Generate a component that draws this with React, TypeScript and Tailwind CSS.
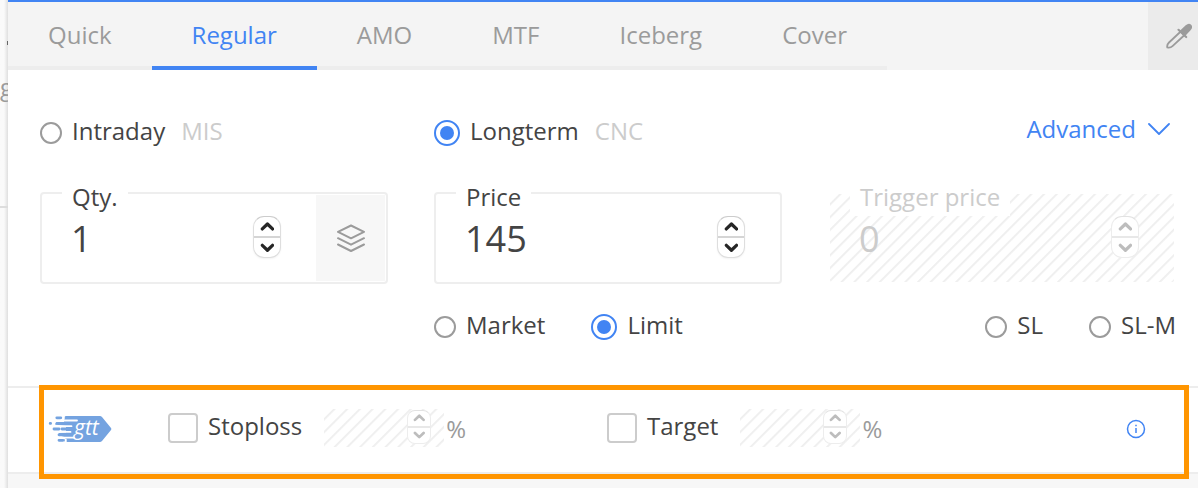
import { useState } from "react";
import type { ReactNode } from "react";

const HATCH =
  "bg-[repeating-linear-gradient(135deg,#ffffff_0px,#ffffff_6px,#eeeeee_7px,#f1f1f1_8px,#ffffff_9px)]";

function RadioOption({
  name,
  checked,
  onChange,
  children,
  hint,
}: {
  name: string;
  checked: boolean;
  onChange: () => void;
  children: ReactNode;
  hint?: string;
}) {
  return (
    <label className="flex items-center gap-[10px] whitespace-nowrap">
      <input
        type="radio"
        name={name}
        checked={checked}
        onChange={onChange}
        className="grid size-[22px] shrink-0 appearance-none place-content-center rounded-full border-2 border-[#9b9b9b] bg-white before:rounded-full checked:size-[26px] checked:border-[#4184f3] checked:before:size-[14px] checked:before:bg-[#4184f3]"
      />
      <span className="pb-1">
        {children}
        {hint && <span className="ml-4 text-[#cccccc]">{hint}</span>}
      </span>
    </label>
  );
}

function Arrow({ up }: { up?: boolean }) {
  return (
    <svg viewBox="0 0 16 10" className="w-4/7" fill="none" stroke="currentColor" strokeWidth="3.500" strokeLinecap="round" strokeLinejoin="round">
      <path d={up ? "M2.500 7.500 8 2.200l5.500 5.300" : "M2.500 2.500 8 7.800l5.500-5.300"} />
    </svg>
  );
}

function Stepper({ label, small, disabled }: { label: string; small?: boolean; disabled?: boolean }) {
  return (
    <span
      className={`mb-[2px] flex shrink-0 flex-col overflow-hidden border bg-white ${
        small ? "h-[34px] w-6 rounded-[8px]" : "h-[42px] w-7 rounded-[11px]"
      } ${
        disabled
          ? "border-[#ededed] border-t-[#e2e2e2] text-[#bdbdbd]"
          : "border-[#dedede] border-t-[#cccccc] text-[#262626] shadow-xs"
      }`}
    >
      <button type="button" disabled={disabled} aria-label={`Increase ${label}`} className={`flex flex-1 items-center justify-center border-b-2 ${disabled ? "border-[#e8e8e8]" : "border-[#d5d5d5]"}`}>
        <Arrow up />
      </button>
      <button type="button" disabled={disabled} aria-label={`Decrease ${label}`} className="flex flex-1 items-center justify-center">
        <Arrow />
      </button>
    </span>
  );
}

function Field({
  id,
  label,
  value,
  disabled,
  children,
}: {
  id: string;
  label: string;
  value: string;
  disabled?: boolean;
  children?: ReactNode;
}) {
  const [text, setText] = useState(value);
  return (
    <div
      className={`relative flex h-[92px] rounded-[4px] border-2 bg-clip-padding ${
        disabled ? `border-transparent text-[#cccccc] ${HATCH}` : "border-[#eeeeee]"
      }`}
    >
      <label htmlFor={id} className="absolute -top-[13px] left-5 bg-white px-[10px] pb-[3px]">
        {label}
      </label>
      <div className="flex min-w-0 flex-1 items-center pr-[35px] pl-[29px]">
        <input
          id={id}
          value={text}
          disabled={disabled}
          onChange={(e) => setText(e.target.value)}
          inputMode="decimal"
          className="min-w-0 flex-1 bg-transparent pt-[2px] text-[36px] leading-[48px] outline-none"
        />
        <Stepper label={label} disabled={disabled} />
      </div>
      {children}
    </div>
  );
}

function GttOption({ label }: { label: string }) {
  return (
    <div className="flex items-center">
      <label className="flex items-center gap-[10px] pb-[2px]">
        <input type="checkbox" className="size-[30px] appearance-none rounded-[4px] border-2 border-[#cccccc] bg-white checked:bg-[#4184f3]" />
        <span className="pb-1">{label}</span>
      </label>
      <span className={`mb-[2px] ml-[22px] flex h-[38px] w-[120px] items-center pr-[13px] ${HATCH}`}>
        <input disabled aria-label={`${label} percentage`} className="min-w-0 flex-1 bg-transparent" />
        <Stepper label={label} small disabled />
      </span>
      <span className="ml-[2px] text-[#9b9b9b]">%</span>
    </div>
  );
}

function GttLogo() {
  return (
    <svg viewBox="0 0 64 26" className="h-[26px] w-16" role="img" aria-label="gtt">
      <path d="M18 0h34q1 0 2 1l9 11q.8 1 0 2l-9 11q-1 1-2 1H18q-2 0-2-2l2-2.500-8-2.500 1-2 7-.5V10L7 8.500l1-2 8-.5V2q0-2 2-2z" fill="#74a3e0" />
      <g stroke="#74a3e0" strokeWidth="2.800" strokeLinecap="round">
        <path d="M2.200 7.400h.4M8.800 1.800h4M9 7.400h10M6 13h5M14 13h8M11 18.800h10M11 24.300h4" />
      </g>
      <g stroke="#ffffff" strokeWidth="1.800" strokeLinecap="round">
        <path d="M13 4.500h16M11 10.200h12.500M10 15.900h12.500M13 21.600h13" />
        <path d="M15.800 0v3M17.800 23.500v2.500" />
      </g>
      <text x="26" y="18.500" fill="#ffffff" fontFamily="Open Sans, sans-serif" fontSize="21" fontWeight="500" fontStyle="italic">
        gtt
      </text>
    </svg>
  );
}

export default function App() {
  const tabs = ["Quick", "Regular", "AMO", "MTF", "Iceberg", "Cover"];
  const [tab, setTab] = useState("Regular");
  const [product, setProduct] = useState("CNC");
  const [type, setType] = useState("Limit");

  return (
    <div className="flex min-h-screen bg-white font-['Open_Sans','Noto_Sans',sans-serif] text-[24px] leading-8 text-[#444444]">
      <aside className="w-2 shrink-0 overflow-hidden bg-linear-to-r from-[#fafafa] from-50% to-[#dfdfdf]">
        <div className="flex h-[208px] flex-col border-b-2 border-[#dddddd] pt-[41px] text-[#9b9b9b]">
          <div className="h-1 w-px self-end bg-[#666666]" />
          <span className="mt-[26px]">g</span>
        </div>
      </aside>

      <main className="flex min-w-0 flex-1 flex-col border-t-2 border-[#4184f3]">
        <header className="flex justify-between bg-[#f4f4f4]">
          <nav className="flex" aria-label="Order type">
            {tabs.map((t) => (
              <button
                key={t}
                type="button"
                onClick={() => setTab(t)}
                className={`border-b-4 px-10 pt-[17px] pb-[15px] ${
                  t === tab ? "border-[#4184f3] text-[#4184f3]" : "border-[#ededed] text-[#9b9b9b]"
                }`}
              >
                {t}
              </button>
            ))}
          </nav>
          <button type="button" aria-label="Pick colour" className="flex w-[50px] items-center justify-end bg-[#ebebeb] pr-[6px] text-[#9b9b9b]">
            <svg viewBox="0 0 26 26" className="size-[26px]" fill="none" stroke="currentColor" strokeWidth="1.800" strokeLinejoin="round" strokeLinecap="round">
              <path d="M14.200 9 3 19.500C1.500 21 .8 22.500 1.300 24.500c2 .5 3.800 0 5.200-1.300L18 12.500" />
              <path d="M12.500 6.800 20.200 14" strokeWidth="2.200" />
              <path d="M14.500 8.300 20.300 3c1.500-1.300 3.200-1.500 4.200-.6 1 1.100.8 2.800-.6 4.200L18.500 12.300z" fill="currentColor" />
            </svg>
          </button>
        </header>

        <section className="px-8 pt-[43px] pr-[22px] pb-[41px]">
          <div className="grid grid-cols-3 items-end gap-x-[46px]">
            <RadioOption name="product" checked={product === "MIS"} onChange={() => setProduct("MIS")} hint="MIS">
              Intraday
            </RadioOption>
            <RadioOption name="product" checked={product === "CNC"} onChange={() => setProduct("CNC")} hint="CNC">
              Longterm
            </RadioOption>
            <button type="button" className="flex items-center justify-end gap-3 pr-[6px] pb-[6px] text-[#4184f3]">
              Advanced
              <svg viewBox="0 0 22 12" className="h-3 w-[22px]" fill="none" stroke="currentColor" strokeWidth="1.800" strokeLinecap="round" strokeLinejoin="round">
                <path d="M1 1l10 10L21 1" />
              </svg>
            </button>
          </div>

          <div className="mt-[41px] grid grid-cols-3 gap-x-[46px]">
            <Field id="qty" label="Qty." value="1">
              <button type="button" aria-label="Lots" className="my-px mr-px flex w-[69px] shrink-0 items-center justify-center bg-[#f7f7f7] text-[#9b9b9b]">
                <svg viewBox="0 0 28 28" className="size-7" fill="none" stroke="currentColor" strokeWidth="2" strokeLinejoin="round" strokeLinecap="round">
                  <path d="M14 1.500 27 7.800 14 14.300 1 7.800z" />
                  <path d="M1 14.200l13 6.500 13-6.500M1 20.500l13 6.500 13-6.500" />
                </svg>
              </button>
            </Field>
            <Field id="price" label="Price" value="145" />
            <Field id="trigger" label="Trigger price" value="0" disabled />
          </div>

          <div className="mt-[25px] grid grid-cols-3 gap-x-[46px]">
            <div className="col-start-2 flex gap-[46px]">
              {["Market", "Limit"].map((t) => (
                <RadioOption key={t} name="type" checked={type === t} onChange={() => setType(t)}>
                  {t}
                </RadioOption>
              ))}
            </div>
            <div className="flex justify-end gap-[46px]">
              {["SL", "SL-M"].map((t) => (
                <RadioOption key={t} name="type" checked={type === t} onChange={() => setType(t)}>
                  {t}
                </RadioOption>
              ))}
            </div>
          </div>
        </section>

        <section className="relative grid h-[88px] grid-cols-[120px_439fr_519fr_20px] items-center border-y-2 border-[#ededed] pr-[52px] pb-[3px] pl-10">
          <GttLogo />
          <GttOption label="Stoploss" />
          <GttOption label="Target" />
          <button type="button" aria-label="About GTT" className="text-[#4184f3]">
            <svg viewBox="0 0 20 20" className="size-5" fill="none" stroke="currentColor" strokeWidth="1.500">
              <circle cx="10" cy="10" r="8.500" />
              <path d="M10 9v5M10 5.800v1.500" />
            </svg>
          </button>
          <div className="pointer-events-none absolute -top-[3px] right-[9px] -bottom-[7px] left-[31px] border-5 border-[#ff9500]" />
        </section>
        <footer className="flex-1 bg-[#f7f7f7]" />
      </main>
    </div>
  );
}
